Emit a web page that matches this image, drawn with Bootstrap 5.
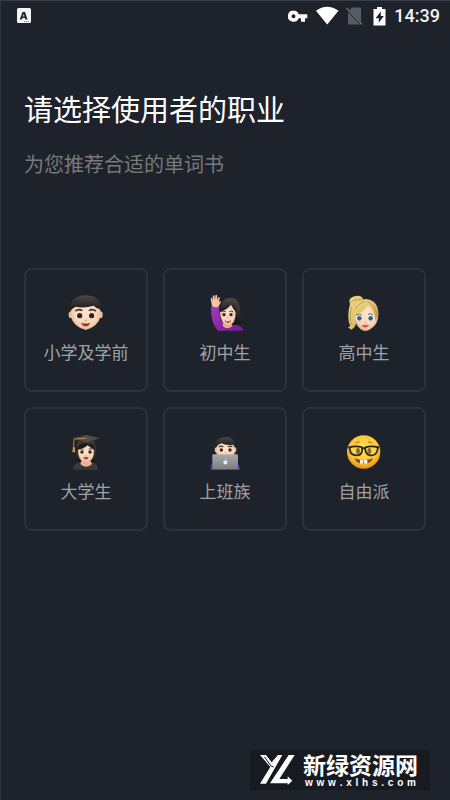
<!DOCTYPE html>
<html lang="zh-CN">
<head>
<meta charset="utf-8">
<meta name="viewport" content="width=device-width, initial-scale=1">
<title>选择职业</title>
<link href="https://cdn.jsdelivr.net/npm/bootstrap@5.3.0/dist/css/bootstrap.min.css" rel="stylesheet">
<style>
  body { background: #1e222b; color: #fff; font-family: "Noto Sans CJK SC", sans-serif; border-top: 1px solid #383d47; border-left: 1px solid #30353f; }
  .page-shell { min-height: calc(100vh - 1px); }
  .status-bar { height: 30px; padding: 0 10px 0 15px; font-family: Roboto, sans-serif; }
  .clock { font-size: 18px; line-height: 20px; font-weight: 500; color: #f4f4f5; }
  .intro { padding: 55px 23px 0; }
  .intro h1 { font-size: 29px; line-height: 44px; font-weight: 400; margin-bottom: 18px; }
  .intro p { font-size: 20px; line-height: 32px; color: #77797d; }
  .job-grid { display: grid; grid-template-columns: repeat(3, 1fr); gap: 15px; padding: 88px 24px 0 23px; }
  .job { aspect-ratio: 1; border: 2px solid #2d3139; border-radius: 8px; background: transparent; color: #a0a2a6; font-size: 17px; line-height: 26px; padding: 14px 0 0; }
  .brand { background: #171a21; width: 180px; height: 40px; margin: 0 20px 10px 0; padding: 0 10px; gap: 8px; }
  .brand-name { font-size: 23px; line-height: 24px; font-weight: 700; }
  .brand-url { font: 700 10px/10px "Liberation Sans", sans-serif; padding: 0 2px; margin-top: 2px; }
</style>
<script src="https://cdn.jsdelivr.net/npm/bootstrap@5.3.0/dist/js/bootstrap.bundle.min.js" defer></script>
</head>
<body>
<svg width="0" height="0" class="position-absolute" aria-hidden="true">
  <defs>
    <radialGradient id="skin" cx=".5" cy=".45" r=".6"><stop offset="0" stop-color="#ffe4cf"/><stop offset=".7" stop-color="#f8d2b5"/><stop offset="1" stop-color="#d59f7f"/></radialGradient>
    <linearGradient id="hair" x1="0" y1="0" x2="0" y2="1"><stop offset="0" stop-color="#4b4747"/><stop offset="1" stop-color="#171414"/></linearGradient>
    <linearGradient id="blond" x1="0" y1="0" x2="1" y2="1"><stop offset="0" stop-color="#f1dc92"/><stop offset=".6" stop-color="#dfbf68"/><stop offset="1" stop-color="#b98d3d"/></linearGradient>
    <linearGradient id="violet" x1="0" y1="0" x2="1" y2="1"><stop offset="0" stop-color="#a23abb"/><stop offset="1" stop-color="#731b8c"/></linearGradient>
    <linearGradient id="silver" x1="0" y1="0" x2="0" y2="1"><stop offset="0" stop-color="#a9a9ac"/><stop offset="1" stop-color="#7f7f83"/></linearGradient>
    <radialGradient id="sun" cx=".5" cy=".4" r=".6"><stop offset="0" stop-color="#ffe254"/><stop offset=".7" stop-color="#fcc537"/><stop offset="1" stop-color="#e68d1c"/></radialGradient>
  </defs>
</svg>
<div class="page-shell d-flex flex-column">
  <header class="status-bar d-flex align-items-center justify-content-between">
    <svg width="15" height="16" viewBox="0 0 15 16" role="img" aria-label="输入法"><rect width="14" height="15" x="1" rx="1.5" fill="#f4f4f4"/><path fill="#20242d" fill-rule="evenodd" d="M6.500 4h2.500l2.500 7.500H9.300L8.900 10H6.400L6 11.500H3.800zm1.200 2-.8 2.500h1.600z"/><path d="M8 13.500h5" stroke="#777" stroke-dasharray="1 1"/></svg>
    <div class="d-flex align-items-center">
      <svg width="108" height="22" viewBox="286 4 108 22" role="img" aria-label="系统状态">
        <path fill="#fff" fill-rule="evenodd" d="M293.500 9.500a5.600 5.600 0 1 0 5.200 7.700h2.300v3.600h4v-3.600h2.300v-4h-8.600a5.600 5.600 0 0 0-5.200-3.700zm0 3.700a2 2 0 1 1 0 4 2 2 0 0 1 0-4z"/>
        <path fill="#fff" d="M316 9.700q11-8 22.500 0L327.200 23.500z"/>
        <path fill="#575b62" d="M352 6.500h9v14.500L349.500 9zM348 11 360 23.500h-12z"/>
        <path d="M346.500 7 362 23.500" stroke="#6b6f75" stroke-width="1.500"/>
        <path fill="#fff" fill-rule="evenodd" d="M377 6h5v2h3.500v16.500h-12V8h3.500zm3.800 4.500-5.300 6.800h3.300v4.500l5-6.800h-3z"/>
      </svg>
      <time class="clock">14:39</time>
    </div>
  </header>
  <main>
    <div class="intro">
      <h1>请选择使用者的职业</h1>
      <p class="mb-0">为您推荐合适的单词书</p>
    </div>
    <div class="job-grid">
      <button type="button" class="job d-flex flex-column align-items-center">
        <svg width="50" height="55" viewBox="3 0 150 165" aria-hidden="true">
          <ellipse cx="32" cy="92" rx="6" ry="10" fill="#efbd9c"/><ellipse cx="122" cy="92" rx="6" ry="10" fill="#efbd9c"/>
          <path d="M32 77Q35 44 77 43t45 34v20q-8 32-45 41-37-9-45-41z" fill="url(#skin)"/>
          <path d="M30 84Q25 38 74 34q54 0 51 50l-6-9q-12-3-18-10-28 9-54 3-11 4-17 16z" fill="url(#hair)"/>
          <path d="M46 81q11-8 21-1M87 80q9-7 21 1" fill="none" stroke="#463126" stroke-width="5"/>
          <ellipse cx="58" cy="95" rx="10" ry="9" fill="#fff"/><ellipse cx="96" cy="95" rx="10" ry="9" fill="#fff"/><circle cx="59" cy="95" r="8" fill="#3b2413"/><circle cx="95" cy="95" r="8" fill="#3b2413"/>
          <path d="M73 108q4 3 8 0" stroke="#d49671" stroke-width="3" fill="none"/><path d="M63 116q14 5 28 0-4 11-14 11t-14-11z" fill="#92372e"/>
        </svg>
        <span>小学及学前</span>
      </button>
      <button type="button" class="job d-flex flex-column align-items-center">
        <svg width="50" height="55" viewBox="0 0 150 165" aria-hidden="true">
          <path d="M63 65q8-29 36-23 21 5 22 40 0 23 9 29-11 16-43 12z" fill="url(#hair)"/>
          <path d="M33 67q12-8 25 1 0 28 7 45l15 12 20-3q25-1 31 18H54Q31 117 33 67z" fill="url(#violet)"/>
          <path d="M70 117h24l3 10q-16 12-29-1z" fill="#e2ad8b"/>
          <path d="M60 84q1-27 22-27t25 29q0 35-23 39-22-4-24-41z" fill="url(#skin)"/>
          <path d="M58 85q0-35 27-38 24 6 24 38-10-10-16-23-10 14-35 23z" fill="url(#hair)"/>
          <path d="m36 65-4-21q0-5 4-2l3 8-1-14q2-5 5 0l2 12 1-14q3-4 5 0l1 15 3-9q4-3 4 1l-2 15 4-5q4 0 1 5l-7 12q-9 5-19-3z" fill="#f3c7a6"/>
          <path d="M65 84q6-5 12-1m11 0q6-4 12 1" fill="none" stroke="#49362c" stroke-width="3"/>
          <circle cx="72" cy="92" r="5" fill="#34251f"/><circle cx="93" cy="92" r="5" fill="#34251f"/><path d="M81 101h5" stroke="#cf8e6a" stroke-width="3"/><path d="M74 108q10 3 19-1-2 10-10 10-7-1-9-9z" fill="#bb4548"/><path d="m77 109 13-1-2 3-9 1z" fill="#fff"/>
        </svg>
        <span>初中生</span>
      </button>
      <button type="button" class="job d-flex flex-column align-items-center">
        <svg width="50" height="55" viewBox="0 0 150 165" aria-hidden="true">
          <path d="M33 59q-9-20 21-24 18 0 18 12-10 11-8 23-10 16-10 36-2 25-17 31l-10-7 7-3q-12-26-1-68z" fill="url(#blond)"/>
          <path d="M46 87q2-37 35-37 35 2 37 39 0 32-22 45-17 13-32 1-20-17-18-48z" fill="url(#skin)"/>
          <path d="M43 103Q40 48 80 45q39 3 38 48-2 9-9 15-1-28-23-46-9 18-26 26-12 5-17 15z" fill="url(#blond)"/>
          <path d="M32 57q10-13 38-9M48 77q9-18 31-26m6 1q23 12 29 39M37 69q-7 37 1 53" fill="none" stroke="#ad8437" stroke-width="2"/>
          <path d="M51 94q8-7 17-1m19-2q9-4 15 2" fill="none" stroke="#886440" stroke-width="3"/>
          <ellipse cx="60" cy="103" rx="9" ry="7" fill="#fff"/><ellipse cx="96" cy="103" rx="9" ry="7" fill="#fff"/><circle cx="61" cy="103" r="7" fill="#2f6292"/><circle cx="95" cy="103" r="7" fill="#2f6292"/>
          <path d="M75 116q4 3 8 0" fill="none" stroke="#d48e70" stroke-width="2"/><path d="M67 124q12-4 24 0-5 7-12 7t-12-7z" fill="#d4585b"/>
        </svg>
        <span>高中生</span>
      </button>
      <button type="button" class="job d-flex flex-column align-items-center">
        <svg width="50" height="55" viewBox="3 -4 150 165" aria-hidden="true">
          <path d="M51 60h52q9 19 4 34l7 13q-14 12-39 10-22 0-34-12 12-12 10-45z" fill="url(#hair)"/>
          <path d="M40 136q0-18 17-22l21 7 19-7q17 4 17 22z" fill="#3a3939"/><path d="M64 108h27l5 11q-18 17-35 0z" fill="#e8b594"/>
          <path d="M54 76q2-16 24-17 22 1 24 17 2 34-24 38-25-3-24-38z" fill="url(#skin)"/>
          <path d="M51 77q4-24 28-24t26 25q-13-7-22-15-10 9-32 14z" fill="#1f1a19"/>
          <path d="M53 48h51v13q-26-9-51 0z" fill="#3a3838"/><path d="m39 42 40-10 41 10-40 12z" fill="#504e4e"/><path d="M79 42 43 44q-2 0-2 38" fill="none" stroke="#c28a35" stroke-width="3"/><path d="M39 68h5l2 16h-9z" fill="#d49435"/>
          <path d="M60 75q5-4 11 0m15 0q6-4 11 0" fill="none" stroke="#49362c" stroke-width="3"/><circle cx="66" cy="83" r="5" fill="#34251f"/><circle cx="90" cy="83" r="5" fill="#34251f"/><path d="M75 93h6" stroke="#d59a77" stroke-width="2"/><path d="M69 99q9-3 18 0-3 7-9 7t-9-7z" fill="#b94748"/>
        </svg>
        <span>大学生</span>
      </button>
      <button type="button" class="job d-flex flex-column align-items-center">
        <svg width="50" height="55" viewBox="0 -4 150 165" aria-hidden="true">
          <path d="M32 136q-2-20 11-24h64q14 7 13 24z" fill="#243bbb"/>
          <ellipse cx="48" cy="76" rx="4" ry="8" fill="#eeb996"/><ellipse cx="105" cy="76" rx="4" ry="8" fill="#eeb996"/>
          <path d="M48 62q5-17 29-17t28 17v20q-5 30-28 32-24-2-29-32z" fill="url(#skin)"/>
          <path d="M47 72q-5-32 29-35 34 2 30 35l-6-11q-25 3-35-4-12 3-18 15z" fill="url(#hair)"/>
          <path d="M57 68q7-5 13 0m14 0q7-5 13 0" fill="none" stroke="#433126" stroke-width="4"/><circle cx="64" cy="77" r="5" fill="#34251f"/><circle cx="90" cy="77" r="5" fill="#34251f"/><path d="M73 85h8" stroke="#d5a27d" stroke-width="2"/>
          <path d="M34 131h84v5H34z" fill="#656469"/><rect x="37" y="90" width="77" height="44" rx="4" fill="url(#silver)"/><path d="M76 109q7-3 6 5 0 7-6 6-6 1-6-6 0-6 6-5zm0-2q0-5 4-5 0 4-4 5z" fill="#eee"/>
        </svg>
        <span>上班族</span>
      </button>
      <button type="button" class="job d-flex flex-column align-items-center">
        <svg width="50" height="55" viewBox="0 -4 150 165" aria-hidden="true">
          <circle cx="74" cy="83" r="50" fill="url(#sun)"/>
          <path d="M46 102q28 11 56 0-6 17-28 17t-28-17z" fill="#8a4e22"/><path d="M63 107h10v11H63zm12 0h10v11H75z" fill="#fff4e2"/>
          <ellipse cx="57" cy="80" rx="6" ry="9" fill="#66401d"/><ellipse cx="91" cy="80" rx="6" ry="9" fill="#66401d"/>
          <path d="M31 69q20-6 38 0 3 22-13 24-22 1-23-17zm48 0q19-6 38 0l-2 9q-4 17-22 15-16-3-14-24z" fill="#ffe575" fill-opacity=".25" stroke="#252422" stroke-width="5"/><path d="M69 74q5-5 10 0M28 69l7 1m78 0 7-1" fill="none" stroke="#252422" stroke-width="5"/>
          <path d="M49 57q6-6 13-4m25 0q8-1 12 4" fill="none" stroke="#a5661c" stroke-width="3"/>
        </svg>
        <span>自由派</span>
      </button>
    </div>
  </main>
  <footer class="brand d-flex align-items-center mt-auto align-self-end">
    <svg width="35" height="30" viewBox="0 0 105 90" aria-hidden="true"><path d="M0 0h18l17 22L54 0h13L18 86H0l31-50zM86 0h18L58 72h25v-8l14 13-14 13v-5H30z" fill="#fff"/><path d="m13 5 20 28 8 3M69 5 28 73" stroke="#171a21" stroke-width="3" fill="none"/></svg>
    <div>
      <div class="brand-name">新绿资源网</div>
      <div class="brand-url d-flex justify-content-between"><span>w</span><span>w</span><span>w</span><span>.</span><span>x</span><span>l</span><span>h</span><span>s</span><span>.</span><span>c</span><span>o</span><span>m</span></div>
    </div>
  </footer>
</div>
</body>
</html>
